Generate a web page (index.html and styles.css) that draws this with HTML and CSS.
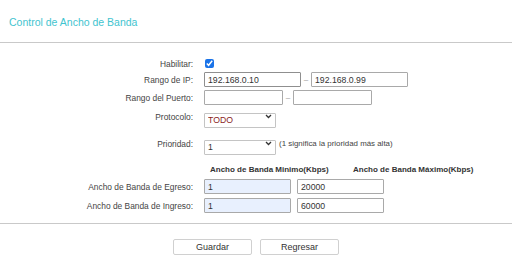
FILE: index.html
```html
<!DOCTYPE html>
<html lang="es">
<head>
    <meta charset="UTF-8">
    <meta name="viewport" content="width=device-width, initial-scale=1.0">
    <title>Control de Ancho de Banda</title>
    <link rel="stylesheet" href="styles.css">
</head>
<body>
    <div class="page">
        <h1 class="title">Control de Ancho de Banda</h1>
        <div class="divider"></div>

        <form class="form" id="bandwidthForm">
            <div class="row row-enable">
                <label class="label" for="enable">Habilitar:</label>
                <input type="checkbox" id="enable" class="check" checked>
            </div>
            <div class="row row-ip">
                <label class="label" for="ipStart">Rango de IP:</label>
                <input type="text" id="ipStart" class="field ip ip-start" value="192.168.0.10">
                <span class="dash">–</span>
                <input type="text" id="ipEnd" class="field ip" value="192.168.0.99">
            </div>
            <div class="row row-port">
                <label class="label" for="portStart">Rango del Puerto:</label>
                <input type="text" id="portStart" class="field port">
                <span class="dash">–</span>
                <input type="text" id="portEnd" class="field port">
            </div>
            <div class="row row-proto">
                <label class="label" for="protocol">Protocolo:</label>
                <div class="select-wrap">
                    <select id="protocol" class="select proto">
                        <option>TODO</option>
                        <option>TCP</option>
                        <option>UDP</option>
                    </select>
                    <svg class="chevron" width="7" height="5" viewBox="0 0 7 5"><path d="M1 1 L3.5 3.5 L6 1" fill="none" stroke="#333" stroke-width="1.3"/></svg>
                </div>
            </div>
            <div class="row row-prio">
                <label class="label" for="priority">Prioridad:</label>
                <div class="select-wrap">
                    <select id="priority" class="select">
                        <option>1</option>
                        <option>2</option>
                        <option>3</option>
                    </select>
                    <svg class="chevron" width="7" height="5" viewBox="0 0 7 5"><path d="M1 1 L3.5 3.5 L6 1" fill="none" stroke="#333" stroke-width="1.3"/></svg>
                </div>
                <span class="hint">(1 significa la prioridad más alta)</span>
            </div>
            <div class="row row-head">
                <span class="label"></span>
                <span class="col-head col-min">Ancho de Banda Minimo(Kbps)</span>
                <span class="col-head">Ancho de Banda Máximo(Kbps)</span>
            </div>
            <div class="row row-egress">
                <label class="label" for="egressMin">Ancho de Banda de Egreso:</label>
                <input type="text" id="egressMin" class="field bw bw-min" value="1">
                <input type="text" id="egressMax" class="field bw" value="20000">
            </div>
            <div class="row row-ingress">
                <label class="label" for="ingressMin">Ancho de Banda de Ingreso:</label>
                <input type="text" id="ingressMin" class="field bw bw-min" value="1">
                <input type="text" id="ingressMax" class="field bw" value="60000">
            </div>
        </form>

        <div class="divider divider-bottom"></div>

        <div class="actions">
            <button type="button" class="btn">Guardar</button>
            <button type="button" class="btn">Regresar</button>
        </div>
    </div>
</body>
</html>
```

FILE: styles.css
```css
body {
    margin: 0;
    background-color: #fff;
    font-family: "Liberation Sans", Arial, sans-serif;
    color: #333;
}
.page {
    width: 512px;
}
.title {
    margin: 0;
    padding: 15px 0 0 9px;
    height: 42px;
    box-sizing: border-box;
    font-size: 10.5px;
    font-weight: normal;
    color: #3fc4cf;
    line-height: 14px;
}
.divider {
    height: 1px;
    background-color: #c9c9c9;
}
.form {
    margin: 0;
    padding-top: 13px;
}
.row {
    display: flex;
    align-items: center;
    height: 15px;
}
.label {
    width: 193px;
    margin-right: 11px;
    text-align: right;
    font-size: 8.4px;
    color: #444;
    flex-shrink: 0;
}
.row-enable {
    margin-bottom: 1px;
}
.row-ip {
    margin-bottom: 3px;
}
.row-port {
    margin-bottom: 4px;
}
.row-proto {
    margin-bottom: 12px;
}
.row-prio {
    margin-bottom: 12px;
}
.row-head {
    height: 12px;
    margin-bottom: 4px;
}
.row-egress {
    margin-bottom: 4px;
}
.check {
    width: 9px;
    height: 9px;
    margin: 0 0 0 1px;
    accent-color: #1a73e8;
}
.field {
    height: 15px;
    box-sizing: border-box;
    margin: 0;
    padding: 0 3px;
    border: 1px solid #a9a9a9;
    border-radius: 1px;
    font-family: "Liberation Sans", Arial, sans-serif;
    font-size: 8.7px;
    color: #333;
    background-color: #fff;
    outline: none;
}
.ip {
    width: 97px;
}
.ip-start {
    border-color: #8f8f8f;
}
.port {
    width: 79px;
}
.dash {
    width: 10px;
    text-align: center;
    font-size: 8px;
    color: #999;
}
.select-wrap {
    position: relative;
    width: 72px;
    height: 15px;
}
.select {
    width: 72px;
    height: 15px;
    margin: 0;
    padding: 0 3px;
    border: 1px solid #c4c4c4;
    border-radius: 1px;
    background-color: #fff;
    appearance: none;
    font-family: "Liberation Sans", Arial, sans-serif;
    font-size: 8.7px;
    color: #333;
    outline: none;
}
.proto {
    color: #8a1c1c;
}
.chevron {
    position: absolute;
    right: 4px;
    top: 5px;
    pointer-events: none;
}
.hint {
    margin-left: 3px;
    font-size: 7.9px;
    color: #444;
}
.col-head {
    font-size: 8px;
    font-weight: bold;
    color: #333;
}
.col-min {
    width: 143px;
    margin-left: 6px;
}
.bw {
    width: 87px;
    margin-right: 6px;
}
.bw-min {
    background-color: #e8f0fe;
}
.divider-bottom {
    margin-top: 10px;
}
.actions {
    display: flex;
    justify-content: center;
    gap: 8px;
    padding: 15px 0 0 0;
}
.btn {
    width: 79px;
    height: 16px;
    padding: 0;
    border: 1px solid #d0d0d0;
    border-radius: 2px;
    background-color: #fff;
    font-family: "Liberation Sans", Arial, sans-serif;
    font-size: 9px;
    color: #333;
    cursor: pointer;
}
.btn:hover {
    background-color: #f2f2f2;
}
```
